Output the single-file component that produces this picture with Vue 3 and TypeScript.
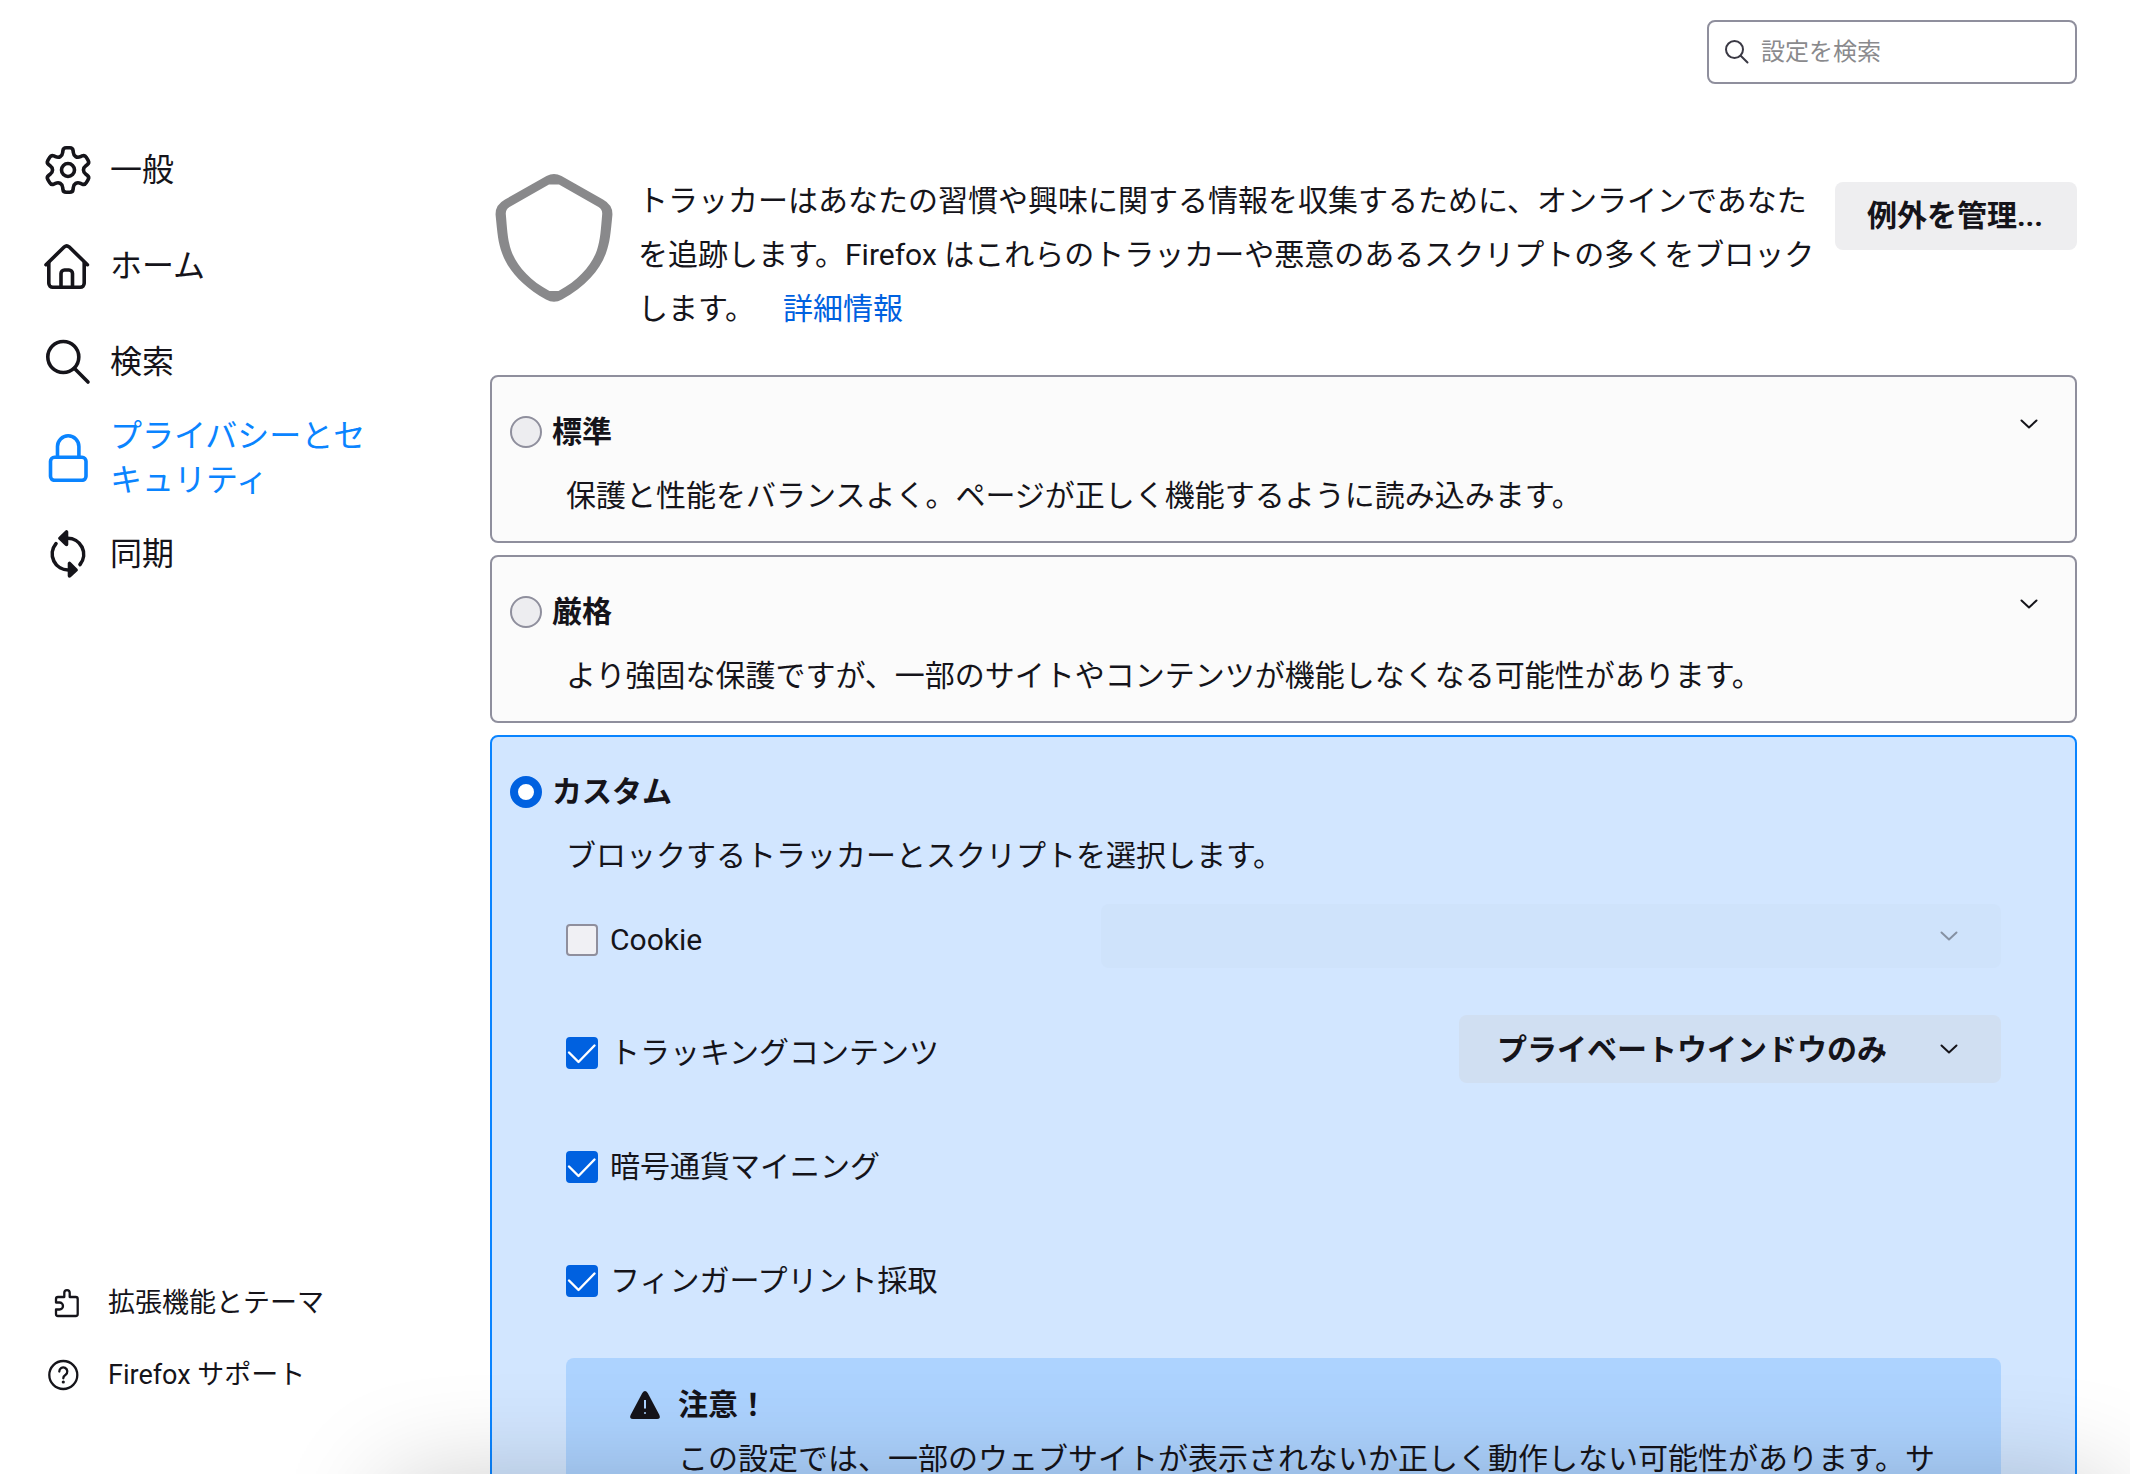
<script setup lang="ts">
import { reactive, ref } from 'vue'

type Level = 'standard' | 'strict' | 'custom'

const gearPath = (() => {
  const tooth = [[-5.6, -14.6], [-4.8, -22.2], [4.8, -22.2], [5.6, -14.6]]
  const pts: number[][] = []
  for (let i = 0; i < 6; i++) {
    const a = (i * Math.PI) / 3
    for (const [x, y] of tooth) {
      pts.push([24 + x * Math.cos(a) - y * Math.sin(a), 24 + x * Math.sin(a) + y * Math.cos(a)])
    }
  }
  const toward = (p: number[], q: number[], r: number) => {
    const d = Math.hypot(q[0] - p[0], q[1] - p[1])
    const t = Math.min(r / d, 0.5)
    return `${(p[0] + (q[0] - p[0]) * t).toFixed(2)} ${(p[1] + (q[1] - p[1]) * t).toFixed(2)}`
  }
  const n = pts.length
  return pts
    .map((p, i) => {
      const before = toward(p, pts[(i + n - 1) % n], 3)
      const after = toward(p, pts[(i + 1) % n], 3)
      return `${i ? 'L' : 'M'}${before}Q${p[0].toFixed(2)} ${p[1].toFixed(2)} ${after}`
    })
    .join('') + 'Z'
})()

const categories = [
  { id: 'general', label: '一般' },
  { id: 'home', label: 'ホーム' },
  { id: 'search', label: '検索' },
  { id: 'privacy', label: 'プライバシーとセキュリティ' },
  { id: 'sync', label: '同期' },
]
const current = 'privacy'

const query = ref('')
const level = ref<Level>('custom')

const presets: { id: Level; title: string; text: string }[] = [
  { id: 'standard', title: '標準', text: '保護と性能をバランスよく。ページが正しく機能するように読み込みます。' },
  { id: 'strict', title: '厳格', text: 'より強固な保護ですが、一部のサイトやコンテンツが機能しなくなる可能性があります。' },
]

const options = reactive([
  { id: 'cookies', label: 'Cookie', checked: false },
  { id: 'tracking', label: 'トラッキングコンテンツ', checked: true },
  { id: 'mining', label: '暗号通貨マイニング', checked: true },
  { id: 'fingerprint', label: 'フィンガープリント採取', checked: true },
])
</script>

<template>
  <div class="page">
    <aside class="sidebar">
      <nav class="categories">
        <a v-for="c in categories" :key="c.id" href="#" class="category" :class="{ active: c.id === current }">
          <svg class="category-icon" viewBox="0 0 48 48" aria-hidden="true">
            <template v-if="c.id === 'general'">
              <path :d="gearPath" />
              <circle cx="24" cy="24" r="6.5" />
            </template>
            <template v-else-if="c.id === 'home'">
              <path d="M2 22.7 20.4 4.8Q22.7 2.8 25 4.8L43.4 22.7" />
              <path d="M4.8 20.500V41.300a4 4 0 0 0 4 4H36.200a4 4 0 0 0 4-4V20.500" />
              <path d="M17 45V31.500a3.500 3.500 0 0 1 3.500-3.500h4.500a3.500 3.500 0 0 1 3.500 3.500V45" />
            </template>
            <template v-else-if="c.id === 'search'">
              <circle cx="19.300" cy="19" r="15.500" />
              <path d="M30.300 30.300 44 44" />
            </template>
            <template v-else-if="c.id === 'privacy'">
              <rect x="6.500" y="23.300" width="35.500" height="23" rx="4" />
              <path d="M13.500 23V12.500a10.700 10.700 0 0 1 21.400 0V23" />
            </template>
            <template v-else>
              <path d="M23 8.300A16 16 0 0 1 36 34.500M25 40A16 16 0 0 1 12 13.700" />
              <path class="solid" d="M22.500 2V14.500L16 8.300ZM25.500 33.500V46L32 40Z" />
            </template>
          </svg>
          <span>{{ c.label }}</span>
        </a>
      </nav>

      <div class="footer-links">
        <a href="#" class="footer-link">
          <svg class="footer-icon" viewBox="0 0 32 32" aria-hidden="true">
            <path d="M9 15.500V12q0-2 2-2h6.300V5.800a2.700 2.700 0 0 1 5.400 0V10h6q2 0 2 2V27q0 2-2 2H11q-2 0-2-2V22.500H12.500a3.500 3.500 0 0 0 0-7Z" />
          </svg>
          <span>拡張機能とテーマ</span>
        </a>
        <a href="#" class="footer-link">
          <svg class="footer-icon" viewBox="0 0 32 32" aria-hidden="true">
            <circle cx="16.300" cy="16" r="14" />
            <path d="M12.300 12.500a4 4 0 1 1 6.300 3.200Q16.300 17.200 16.300 19.300" />
            <circle class="dot" cx="16.300" cy="23" r="1.600" />
          </svg>
          <span>Firefox サポート</span>
        </a>
      </div>
    </aside>

    <main class="content">
      <label class="search">
        <svg class="search-icon" viewBox="0 0 24 24" aria-hidden="true">
          <circle cx="9.500" cy="9.500" r="8.500" />
          <path d="M15.700 15.700 22.500 22.500" />
        </svg>
        <input v-model="query" class="search-input" type="search" placeholder="設定を検索" aria-label="設定を検索" />
      </label>

      <header class="intro">
        <svg class="shield" viewBox="0 0 118 128" aria-hidden="true">
          <path fill-rule="evenodd" d="M51.500 2Q59-2 66.500 2L108 25.500Q118 31 117.400 41C115.500 60 115 68 111 79C105 96 91 112 67 125.500Q59 130 51 125.500C27 112 13 96 7 79C3 68 2.500 60 .6 41Q0 31 10 25.500ZM54 10.500 14.500 33Q10.500 35.500 10.800 40C12.200 56 12.500 65 16 76C21 91 34 106 54.500 117H63.500C84 106 97 91 102 76C105.500 65 105.800 56 107.200 40Q107.500 35.500 103.500 33L64 10.500Z" />
        </svg>
        <p class="intro-text">
          トラッカーはあなたの習慣や興味に関する情報を収集するために、オンラインであなたを追跡します。Firefox はこれらのトラッカーや悪意のあるスクリプトの多くをブロックします。<a href="#" class="learn-more">詳細情報</a>
        </p>
        <button type="button" class="exceptions">例外を管理...</button>
      </header>

      <section class="levels">
        <article v-for="p in presets" :key="p.id" class="card" :class="{ selected: level === p.id }">
          <div class="card-head">
            <label class="choice">
              <input v-model="level" class="radio" type="radio" name="level" :value="p.id" />
              <span>{{ p.title }}</span>
            </label>
            <button type="button" class="expander" :aria-label="p.title">
              <svg class="chevron" viewBox="0 0 18 10" aria-hidden="true"><path d="M1.500 1.500 9 8.500 16.500 1.500" /></svg>
            </button>
          </div>
          <p class="description">{{ p.text }}</p>
        </article>

        <article class="card" :class="{ selected: level === 'custom' }">
          <div class="card-head">
            <label class="choice">
              <input v-model="level" class="radio" type="radio" name="level" value="custom" />
              <span>カスタム</span>
            </label>
          </div>
          <p class="description">ブロックするトラッカーとスクリプトを選択します。</p>

          <div class="custom">
            <div v-for="o in options" :key="o.id" class="option">
              <label class="option-label">
                <span class="box">
                  <input v-model="o.checked" class="checkbox" type="checkbox" />
                  <svg v-if="o.checked" class="tick" viewBox="0 0 32 32" aria-hidden="true">
                    <path d="M3 15.500 12.500 25 28.500 8.500" />
                  </svg>
                </span>
                <span>{{ o.label }}</span>
              </label>
              <div v-if="o.id === 'cookies'" class="menu wide" :class="{ disabled: !o.checked }">
                <select class="select" :disabled="!o.checked" aria-label="Cookie"></select>
                <svg class="chevron menu-chevron" viewBox="0 0 18 10" aria-hidden="true"><path d="M1.500 1.500 9 8.500 16.500 1.500" /></svg>
              </div>
              <div v-else-if="o.id === 'tracking'" class="menu">
                <select class="select" aria-label="トラッキングコンテンツ">
                  <option>プライベートウインドウのみ</option>
                </select>
                <svg class="chevron menu-chevron" viewBox="0 0 18 10" aria-hidden="true"><path d="M1.500 1.500 9 8.500 16.500 1.500" /></svg>
              </div>
            </div>

            <div class="notice">
              <svg class="warning" viewBox="0 0 32 32" aria-hidden="true">
                <path d="M13.300 4Q16 0 18.700 4L30.400 26Q32 30 28 30H4Q0 30 1.600 26Z" />
                <path class="mark" d="M16 11V19.500M16 23.200V24.800" />
              </svg>
              <div class="notice-body">
                <h2 class="notice-title">注意！</h2>
                <p class="notice-text">この設定では、一部のウェブサイトが表示されないか正しく動作しない可能性があります。サ</p>
              </div>
            </div>
          </div>
        </article>
      </section>
    </main>

    <div class="bottom-shadow" aria-hidden="true"></div>
  </div>
</template>

<style>
body {
  margin: 0;
  background: #fff;
}
</style>

<style scoped>
.page {
  position: relative;
  display: flex;
  height: 100vh;
  overflow: hidden;
  box-sizing: border-box;
  color: #15141a;
  font-family: Roboto, "Noto Sans CJK JP", sans-serif;
  font-size: 30px;
  line-height: 54px;
}
.page * {
  box-sizing: border-box;
}
h2,
p {
  margin: 0;
}
a {
  text-decoration: none;
}
input,
select,
button {
  margin: 0;
  font-family: inherit;
  color: inherit;
  appearance: none;
}

/* sidebar */
.sidebar {
  flex: none;
  width: 378px;
  display: flex;
  flex-direction: column;
  justify-content: space-between;
  padding: 122px 0 63px 44px;
}
.category {
  display: flex;
  align-items: center;
  gap: 18px;
  height: 96px;
  color: inherit;
  font-size: 32px;
  line-height: 44px;
}
.category.active {
  color: #0a84ff;
}
.category-icon {
  flex: none;
  width: 48px;
  height: 48px;
  fill: none;
  stroke: currentColor;
  stroke-width: 3.6;
  stroke-linecap: round;
  stroke-linejoin: round;
}
.solid {
  fill: currentColor;
}
.footer-link {
  display: flex;
  align-items: center;
  gap: 29px;
  height: 72px;
  padding-left: 3px;
  color: inherit;
  font-size: 27px;
}
.footer-icon {
  flex: none;
  width: 32px;
  height: 32px;
  fill: none;
  stroke: currentColor;
  stroke-width: 2.3;
  stroke-linecap: round;
  stroke-linejoin: round;
}
.dot {
  fill: currentColor;
  stroke: none;
}

/* main column */
.content {
  flex: 1;
  min-width: 0;
  display: flex;
  flex-direction: column;
  padding: 20px 53px 0 112px;
}
.search {
  align-self: flex-end;
  flex: none;
  display: flex;
  align-items: center;
  gap: 12px;
  width: 370px;
  height: 64px;
  padding: 0 16px;
  border: 2px solid #8f8f9d;
  border-radius: 8px;
}
.search-icon {
  flex: none;
  width: 24px;
  height: 24px;
  fill: none;
  stroke: #3a3944;
  stroke-width: 2;
  stroke-linecap: round;
}
.search-input {
  flex: 1;
  min-width: 0;
  padding: 0;
  border: 0;
  outline: 0;
  background: none;
  font-size: 24px;
}
.search-input::placeholder {
  color: #8a8a8d;
  opacity: 1;
}

.intro {
  flex: none;
  display: flex;
  align-items: flex-start;
  margin: 90px 0 39px;
  padding-left: 5px;
}
.shield {
  flex: none;
  width: 118px;
  height: 128px;
  fill: #89898b;
}
.intro-text {
  flex: 1;
  padding: 0 4px 0 25px;
}
.learn-more {
  margin-left: 28px;
  color: #0061e0;
}
.exceptions {
  flex: none;
  height: 68px;
  margin-top: 8px;
  padding: 0 34px 6px 32px;
  border: 0;
  border-radius: 8px;
  background: #eeeef0;
  font-size: 30px;
  font-weight: 700;
}

.levels {
  display: flex;
  flex-direction: column;
  gap: 12px;
}
.card {
  flex: none;
  padding: 30px 30px 18px 18px;
  border: 2px solid #8f8f9d;
  border-radius: 8px;
  background: #fbfbfb;
}
.card.selected {
  border-color: #0a84ff;
  background: #d2e6ff;
}
.card-head {
  display: flex;
  align-items: flex-start;
  justify-content: space-between;
  height: 50px;
}
.choice {
  display: flex;
  align-items: center;
  gap: 10px;
  height: 50px;
  font-weight: 700;
}
.radio {
  width: 32px;
  height: 32px;
  border: 2px solid #8f8f9d;
  border-radius: 50%;
  background: #ededf0;
}
.radio:checked {
  border: 8px solid #0061e0;
  background: #fff;
}
.expander {
  display: flex;
  align-items: center;
  justify-content: center;
  width: 32px;
  height: 34px;
  padding: 0;
  border: 0;
  background: none;
}
.chevron {
  width: 18px;
  height: 10px;
  fill: none;
  stroke: currentColor;
  stroke-width: 2;
  stroke-linecap: round;
  stroke-linejoin: round;
}
.description {
  margin: 12px 0 0 56px;
}

.custom {
  margin: 0 44px 0 56px;
}
.option {
  display: flex;
  align-items: center;
  justify-content: space-between;
  height: 114px;
}
.option:first-child {
  height: 113px;
}
.option-label {
  display: flex;
  align-items: center;
  gap: 12px;
}
.box {
  position: relative;
  width: 32px;
  height: 32px;
}
.checkbox {
  display: block;
  width: 32px;
  height: 32px;
  border: 2px solid #8f8f9d;
  border-radius: 4px;
  background: #f0f0f4;
}
.checkbox:checked {
  border-color: #0061e0;
  background: #0061e0;
}
.tick {
  position: absolute;
  inset: 0;
  fill: none;
  stroke: #fff;
  stroke-width: 2.4;
  stroke-linecap: round;
  stroke-linejoin: round;
  pointer-events: none;
}
.menu {
  position: relative;
  margin-bottom: 8px;
}
.menu.wide {
  width: 900px;
}
.menu.disabled {
  opacity: 0.4;
}
.select {
  display: block;
  width: 100%;
  height: 68px;
  padding: 0 114px 0 38px;
  border: 0;
  border-radius: 8px;
  background: #d0dff2;
  font-size: 30px;
  font-weight: 700;
}
.wide .select {
  height: 64px;
  background: #c9dcf4;
}
.menu-chevron {
  position: absolute;
  top: 50%;
  right: 43px;
  margin-top: -5px;
  pointer-events: none;
}

.notice {
  display: flex;
  gap: 17px;
  margin-top: 20px;
  padding: 20px 48px 40px 63px;
  border-radius: 8px;
  background: #add3ff;
}
.warning {
  flex: none;
  width: 32px;
  height: 32px;
  margin-top: 11px;
  fill: #15141a;
}
.mark {
  stroke: #add3ff;
  stroke-width: 2;
}
.notice-title {
  font-size: 30px;
  font-weight: 700;
}

/* soft shadow rising from below the window's lower edge */
.bottom-shadow {
  position: absolute;
  top: 100%;
  left: 400px;
  right: 30px;
  height: 200px;
  box-shadow: 0 20px 110px 10px rgba(0, 0, 0, 0.22);
  pointer-events: none;
}
</style>
